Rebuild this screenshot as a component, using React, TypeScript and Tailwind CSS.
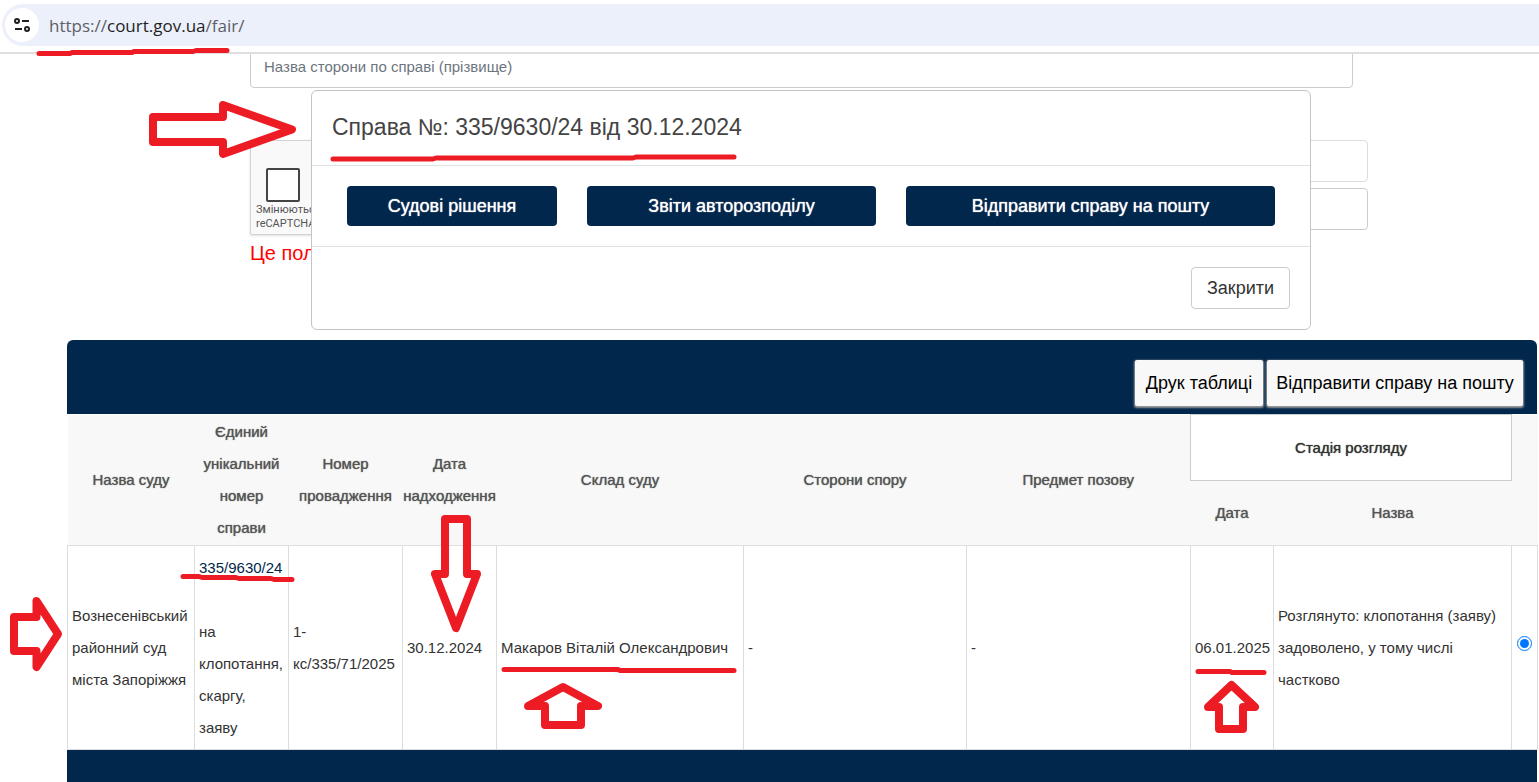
import React from "react";

const columns = [
  "w-[127px]",
  "w-[94px]",
  "w-[114px]",
  "w-[94px]",
  "w-[247px]",
  "w-[223px]",
  "w-[224px]",
  "w-[83px]",
  "w-[238px]",
  "w-[26px]",
];

const headings = [
  "Назва суду",
  "Єдиний унікальний номер справи",
  "Номер провадження",
  "Дата надходження",
  "Склад суду",
  "Сторони спору",
  "Предмет позову",
];

const cell = "border border-[#dddddd] px-1 py-0 align-middle";
const heading = "p-0 text-center align-middle font-normal";
const modalButton =
  "h-10 rounded bg-[#01274c] text-lg text-white [text-shadow:0_0_1px_currentColor]";
const tableButton =
  "h-[46px] rounded-xs bg-[#f8f8f8] text-lg text-black shadow-[0_1px_2px_1px_#9a9a9a]";

function AddressBar() {
  return (
    <header className="border-b-2 border-[#dedfe1] pt-1 pb-1.5">
      <div className="ml-0.5 flex h-[42px] items-center gap-2.5 rounded-l-full bg-[#ecf0fb] pl-[3px]">
        <button
          type="button"
          aria-label="Відомості про сайт"
          className="flex size-[34px] items-center justify-center rounded-full bg-white"
        >
          <svg width="18" height="18" viewBox="0 0 18 18" fill="none" stroke="#1f1f1f" strokeWidth="2">
            <circle cx="4" cy="5" r="2" />
            <path d="M9 5h7M2 13h7" />
            <circle cx="14" cy="13" r="2" />
          </svg>
        </button>
        <p className="pt-0.5 font-['Open_Sans',sans-serif] text-[17px] leading-6 text-[#5b5f66]">
          https://<span className="text-[#1f1f1f]">court.gov.ua</span>/fair/
        </p>
      </div>
    </header>
  );
}

function SearchForm() {
  return (
    <form className="h-[286px] overflow-hidden pr-[171px] pl-[250px]">
      <input
        type="text"
        aria-label="Назва сторони по справі"
        placeholder="Назва сторони по справі (прізвище)"
        className="-mt-2 mr-[15px] block h-[42px] w-[calc(100%-15px)] rounded border border-[#cccccc] px-[13px] pb-0.5 text-[15px] placeholder:text-[#6c757d]"
      />
      <div className="mt-[52px] grid grid-cols-2 gap-5">
        <div className="h-[95px] w-[304px] rounded-xs border border-[#d3d3d3] bg-[#f9f9f9] px-[5px] pt-[27px] shadow-sm">
          <input
            type="checkbox"
            aria-label="reCAPTCHA"
            className="ml-2.5 block size-[34px] appearance-none rounded-xs border-2 border-[#444444] bg-white"
          />
          <p className="pt-px font-[Roboto,sans-serif] text-[11px] leading-[14px] text-[#555555]">
            Змінюються
            <br />
            reCAPTCHA
          </p>
        </div>
        <div className="flex flex-col gap-1.5">
          <input type="text" aria-label="Номер справи" className="h-[42px] rounded border border-[#dddddd]" />
          <input type="text" aria-label="Пошук" className="h-[42px] rounded border border-[#cccccc]" />
        </div>
      </div>
      <p className="mt-1 text-xl leading-7 text-[#ff0000]">Це поле</p>
    </form>
  );
}

function CaseDialog() {
  return (
    <section
      role="dialog"
      aria-labelledby="case-title"
      className="absolute top-9 right-[228px] left-[311px] rounded-md border border-[#c4c4c4] bg-white"
    >
      <h2 id="case-title" className="border-b border-[#dee2e6] px-5 pt-5 pb-[22px] text-[23px] leading-8 text-[#444444]">
        Справа №: 335/9630/24 від 30.12.2024
      </h2>
      <div className="grid grid-cols-[210fr_289fr_369fr] gap-[30px] border-b border-[#dee2e6] px-[35px] py-5">
        <button type="button" className={modalButton}>Судові рішення</button>
        <button type="button" className={modalButton}>Звіти авторозподілу</button>
        <button type="button" className={modalButton}>Відправити справу на пошту</button>
      </div>
      <div className="flex justify-end p-5">
        <button type="button" className="h-[42px] rounded border border-[#cccccc] bg-white px-[15px] text-lg text-[#333333]">
          Закрити
        </button>
      </div>
    </section>
  );
}

function CaseTable() {
  return (
    <section className="mr-[2px] ml-[67px]">
      <div className="flex h-[74px] items-center justify-end gap-1 rounded-t-md bg-[#01274c] pt-3 pr-3.5">
        <button type="button" className={tableButton + " w-[128px]"}>Друк таблиці</button>
        <button type="button" className={tableButton + " w-[256px]"}>Відправити справу на пошту</button>
      </div>
      <table className="w-full table-fixed border-collapse text-[15px] leading-8 text-[#333333]">
        <colgroup>
          {columns.map((width, i) => (
            <col key={i} className={width} />
          ))}
        </colgroup>
        <thead className="bg-[#f8f8f8] text-[#555555] [text-shadow:0_0_1px_currentColor]">
          <tr className="h-[66px]">
            {headings.map((text) => (
              <th key={text} rowSpan={2} className={heading}>{text}</th>
            ))}
            <th colSpan={2} className="border border-[#cccccc] bg-white text-center font-normal text-[#333333]">
              Стадія розгляду
            </th>
            <th rowSpan={2} aria-label="Вибір" />
          </tr>
          <tr className="h-[65px]">
            <th className={heading}>Дата</th>
            <th className={heading}>Назва</th>
          </tr>
        </thead>
        <tbody>
          <tr className="h-[204px]">
            <td className={cell}>Вознесенівський районний суд міста Запоріжжя</td>
            <td className={cell}>
              <a href="#case" className="text-[#01274c]">335/9630/24</a>
              <br />
              <br />
              на клопотання, скаргу, заяву
            </td>
            <td className={cell}>1-<br />кс/335/71/2025</td>
            <td className={cell}>30.12.2024</td>
            <td className={cell}>Макаров Віталій Олександрович</td>
            <td className={cell}>-</td>
            <td className={cell}>-</td>
            <td className={cell}>06.01.2025</td>
            <td className={cell}>Розглянуто: клопотання (заяву) задоволено, у тому числі частково</td>
            <td className={cell}>
              <input
                type="radio"
                name="case"
                defaultChecked
                aria-label="Вибрати справу 335/9630/24"
                className="mx-auto mb-2 block size-[15px] accent-[#0075ff]"
              />
            </td>
          </tr>
        </tbody>
      </table>
      <div className="h-8 bg-[#01274c]" />
    </section>
  );
}

function Annotations() {
  return (
    <svg
      className="pointer-events-none absolute top-0 left-0"
      width="1539"
      height="782"
      viewBox="0 0 1539 782"
      fill="none"
      stroke="#ed1c24"
      strokeLinecap="round"
      strokeLinejoin="round"
      aria-hidden="true"
    >
      <g strokeWidth="5">
        <path d="M39 53.500H70L72 52.500H132L134 51.500H193L196 50.500H227" />
        <path d="M333 159H433L436 158H633L636 157H734" />
        <path d="M183 576.500H199L202 577.500H236L239 578.500H271L274 579.500H292" />
        <path d="M504 669.500H618L620 670.500H734" />
        <path d="M1198 671.500H1230L1232 672.500H1264" />
      </g>
      <g strokeWidth="8">
        <path d="M153 117H223V105L292 129.500L223 154V142H153Z" />
        <path d="M14 617H36.500V601L58 634L36.500 667V651H14Z" />
        <path d="M445 519H467V574H477L456 628L435 574H445Z" />
        <path d="M563 687L598 706H581V725H545V706H528Z" />
        <path d="M1231.500 685L1255 707H1243V729H1219V707H1208Z" />
      </g>
    </svg>
  );
}

export default function App() {
  return (
    <div className="relative overflow-hidden bg-white font-['Liberation_Sans',Arial,sans-serif]">
      <AddressBar />
      <main className="relative">
        <SearchForm />
        <CaseDialog />
        <CaseTable />
      </main>
      <Annotations />
    </div>
  );
}
